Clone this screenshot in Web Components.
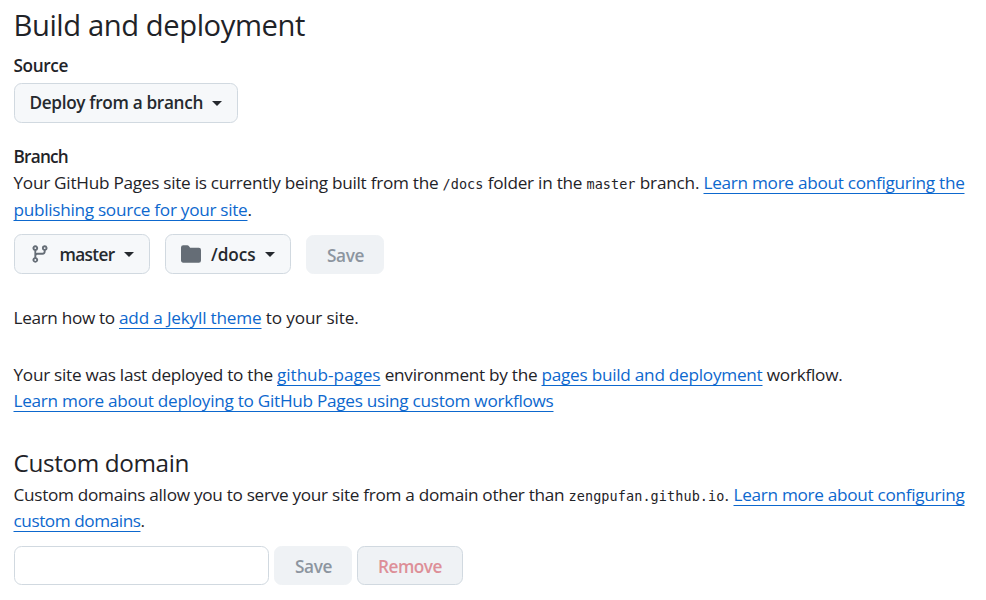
<!DOCTYPE html>
<html lang="en">
<head>
<meta charset="utf-8">
<title>Pages settings</title>
<style>
body{margin:0;background:#fff;color:#1f2328;font:17.2px/26px "Open Sans","Noto Sans",sans-serif}
</style>
</head>
<body>
<pages-settings></pages-settings>
<script>
const define=(name,css,html,ready)=>customElements.define(name,class extends HTMLElement{
  constructor(){super();this.attachShadow({mode:'open'}).innerHTML=`<style>${css}</style>${html}`;}
  connectedCallback(){if(ready)ready(this);}
});
// A run of text tracked to fill its declared advance width.
define('text-run',`
:host{display:inline-block;white-space:pre}
:host([kind=link]) span{color:#0d68ce;text-decoration:underline 1px;text-underline-offset:3.5px;text-decoration-skip-ink:none}
:host([skip]) span{text-decoration-skip-ink:auto!important}
:host([kind=code]) span{font:13.5px/20px "DejaVu Sans Mono",monospace}
`,'<span><slot></slot></span>',el=>{
  const w=parseFloat(el.getAttribute('w')),s=el.shadowRoot.querySelector('span');
  const n=el.textContent.length;
  s.style.letterSpacing=((w-s.getBoundingClientRect().width)/n)+'px';
  el.style.width=w+'px';
});
define('text-line',':host{display:flex;align-items:baseline;height:var(--h,26px);line-height:var(--h,26px);white-space:pre}','<slot></slot>');
define('section-title',':host{display:block;font-size:var(--size);height:var(--h);line-height:var(--h)}','<slot></slot>');
define('field-label',':host{display:block;font-weight:580;height:26px;line-height:26px}','<slot></slot>');
define('ui-button',`
:host{display:flex;align-items:center;box-sizing:border-box;height:40px;padding-left:15px;border:1px solid #d1d9e0;border-radius:7.5px;background:#f6f8fa;color:#25292e;font-weight:580;line-height:24px}
:host([disabled]){height:39px;background:#eff2f5;border-color:#eff2f5;color:#8c959f;padding:2px 0 0 20px}
:host([danger]){border-color:#d1d9e0;color:#dd8f98}
`,'<slot></slot>');
define('ui-icon',':host{display:block;flex:none;color:#656d76}svg{display:block;fill:currentColor}:host([name=caret]){color:#25292e}','',el=>{
  const icons={
    caret:['0 0 10 5',10,5,'M0 0h10L5 5z'],
    branch:['0 0 16 16',20,20,'M9.5 3.25a2.25 2.25 0 1 1 3 2.122V6A2.5 2.5 0 0 1 10 8.5H6a1 1 0 0 0-1 1v1.128a2.251 2.251 0 1 1-1.5 0V5.372a2.25 2.25 0 1 1 1.5 0v1.836A2.493 2.493 0 0 1 6 7h4a1 1 0 0 0 1-1v-.628A2.25 2.25 0 0 1 9.5 3.25Zm-6 0a.75.75 0 1 0 1.5 0 .75.75 0 0 0-1.5 0Zm8.25-.75a.75.75 0 1 0 0 1.5.75.75 0 0 0 0-1.5ZM4.25 12a.75.75 0 1 0 0 1.5.75.75 0 0 0 0-1.5Z'],
    folder:['0 0 16 16',24,20,'M1.75 1A1.75 1.75 0 0 0 0 2.75v10.5C0 14.216.784 15 1.75 15h12.5A1.75 1.75 0 0 0 16 13.25v-8.5A1.75 1.75 0 0 0 14.25 3H7.5a.25.25 0 0 1-.2-.1l-.9-1.2C6.07 1.26 5.55 1 5 1H1.75Z']
  };
  const [box,w,h,d]=icons[el.getAttribute('name')];
  el.shadowRoot.innerHTML+=`<svg width="${w}" height="${h}" viewBox="${box}"><path d="${d}"/></svg>`;
});
define('domain-input',':host{display:block;width:255px}input{display:block;box-sizing:border-box;width:100%;height:39px;border:1px solid #d1d9e0;border-radius:7.5px;background:#fff;padding:0 14px;font:inherit}','<input aria-label="Custom domain">');
define('button-row',':host{display:flex;align-items:flex-end;gap:var(--gap,15px)}','<slot></slot>');
define('pages-settings',`
:host{display:block;box-sizing:border-box;width:986px;height:600px;padding:5px 14px 0 13.5px;overflow:hidden}
button-row{margin-left:.5px}
`,`
<section-title style="--size:29.2px;--h:40px"><text-run w="291.5">Build and deployment</text-run></section-title>
<field-label style="margin-top:8px"><text-run w="54.5">Source</text-run></field-label>
<button-row style="margin-top:4px">
  <ui-button style="width:224px;padding-left:14.5px"><text-run w="173.5">Deploy from a branch</text-run><ui-icon name="caret" style="margin:1px 0 0 9px"></ui-icon></ui-button>
</button-row>
<field-label style="margin-top:21px"><text-run w="54.5">Branch</text-run></field-label>
<text-line><text-run w="429">Your GitHub Pages site is currently being built from the </text-run><text-run kind="code" w="41">/docs</text-run><text-run w="103"> folder in the </text-run><text-run kind="code" w="49">master</text-run><text-run w="68"> branch. </text-run><text-run kind="link" w="261">Learn more about configuring the</text-run></text-line>
<text-line style="margin-top:1px"><text-run kind="link" skip w="234">publishing source for your site</text-run><text-run w="4">.</text-run></text-line>
<button-row style="margin-top:11px">
  <ui-button style="width:136px"><ui-icon name="branch"></ui-icon><text-run w="55" style="margin:1px 0 0 9.5px">master</text-run><ui-icon name="caret" style="margin:1px 0 0 9.5px"></ui-icon></ui-button>
  <ui-button style="width:126px;padding-left:13px"><ui-icon name="folder"></ui-icon><text-run w="44.5" style="margin:1px 0 0 8px">/docs</text-run><ui-icon name="caret" style="margin:1px 0 0 9.5px"></ui-icon></ui-button>
  <ui-button disabled style="width:78px"><text-run w="37">Save</text-run></ui-button>
</button-row>
<text-line style="margin-top:31px"><text-run w="105.5">Learn how to </text-run><text-run kind="link" w="142.5">add a Jekyll theme</text-run><text-run w="97"> to your site.</text-run></text-line>
<text-line style="margin-top:31px"><text-run w="263.5">Your site was last deployed to the </text-run><text-run kind="link" skip w="103.5">github-pages</text-run><text-run w="161"> environment by the </text-run><text-run kind="link" skip w="221">pages build and deployment</text-run><text-run w="80"> workflow.</text-run></text-line>
<text-line><text-run kind="link" w="540">Learn more about deploying to GitHub Pages using custom workflows</text-run></text-line>
<section-title style="--size:24.3px;--h:34px;margin-top:32px"><text-run w="175.5">Custom domain</text-run></section-title>
<text-line style="margin-top:2px"><text-run w="555">Custom domains allow you to serve your site from a domain other than </text-run><text-run kind="code" w="156">zengpufan.github.io</text-run><text-run w="9">. </text-run><text-run kind="link" skip w="231">Learn more about configuring</text-run></text-line>
<text-line><text-run kind="link" w="127">custom domains</text-run><text-run w="4">.</text-run></text-line>
<button-row style="--gap:5px;margin-top:12px">
  <domain-input></domain-input>
  <ui-button disabled style="width:78px"><text-run w="37">Save</text-run></ui-button>
  <ui-button disabled danger style="width:106px"><text-run w="64">Remove</text-run></ui-button>
</button-row>
`);
</script>
</body>
</html>
